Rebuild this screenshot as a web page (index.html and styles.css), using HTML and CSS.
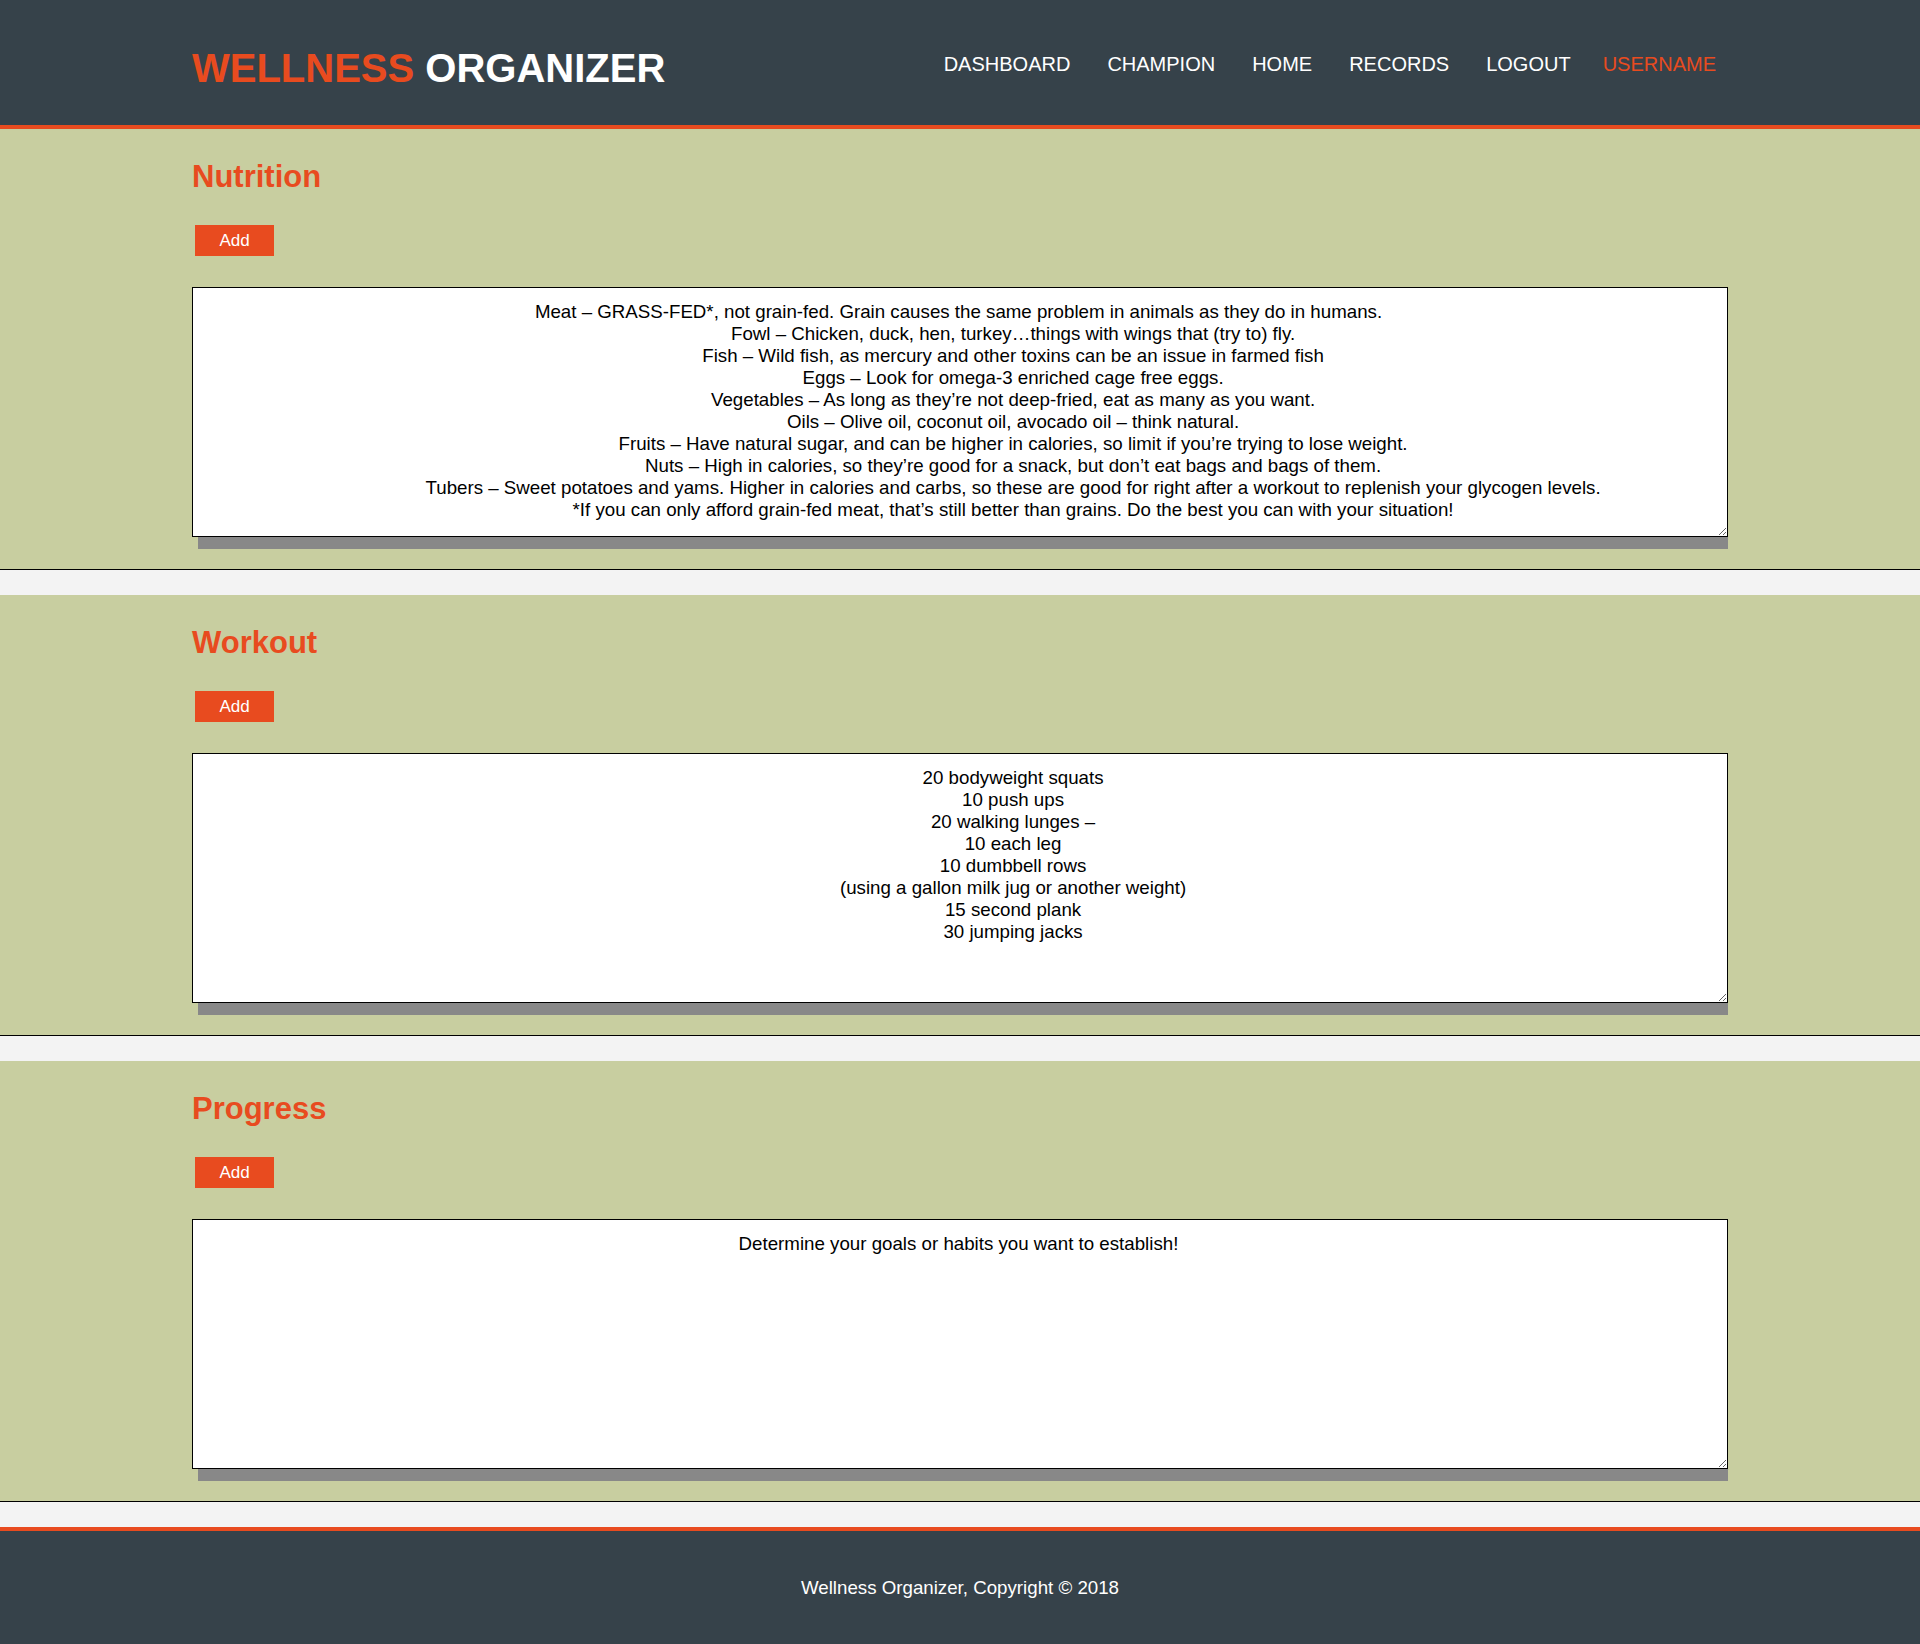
FILE: index.html
```html
<!DOCTYPE html>
<html lang="en">
<head>
<meta charset="utf-8">
<title>Wellness Organizer</title>
<link rel="stylesheet" href="styles.css">
</head>
<body>
<header class="site-header">
  <div class="container header-inner">
    <h1 class="logo"><span class="logo-accent">WELLNESS</span> ORGANIZER</h1>
    <nav class="main-nav">
      <ul class="nav-list">
        <li><a href="#">DASHBOARD</a></li>
        <li><a href="#">CHAMPION</a></li>
        <li><a href="#">HOME</a></li>
        <li><a href="#">RECORDS</a></li>
        <li><a href="#">LOGOUT</a></li>
        <li class="nav-user"><a href="#">USERNAME</a></li>
      </ul>
    </nav>
  </div>
</header>

<main>
  <section class="panel">
    <div class="container">
      <h2 class="panel-title">Nutrition</h2>
      <button class="add-btn" type="button">Add</button>
      <textarea class="panel-text">Meat – GRASS-FED*, not grain-fed. Grain causes the same problem in animals as they do in humans.
                     Fowl – Chicken, duck, hen, turkey…things with wings that (try to) fly.
                     Fish – Wild fish, as mercury and other toxins can be an issue in farmed fish
                     Eggs – Look for omega-3 enriched cage free eggs.
                     Vegetables – As long as they’re not deep-fried, eat as many as you want.
                     Oils – Olive oil, coconut oil, avocado oil – think natural.
                     Fruits – Have natural sugar, and can be higher in calories, so limit if you’re trying to lose weight.
                     Nuts – High in calories, so they’re good for a snack, but don’t eat bags and bags of them.
                     Tubers – Sweet potatoes and yams. Higher in calories and carbs, so these are good for right after a workout to replenish your glycogen levels.
                     *If you can only afford grain-fed meat, that’s still better than grains. Do the best you can with your situation!</textarea>
    </div>
  </section>

  <section class="panel">
    <div class="container">
      <h2 class="panel-title">Workout</h2>
      <button class="add-btn" type="button">Add</button>
      <textarea class="panel-text">
                     20 bodyweight squats
                     10 push ups
                     20 walking lunges –
                     10 each leg
                     10 dumbbell rows
                     (using a gallon milk jug or another weight)
                     15 second plank
                     30 jumping jacks</textarea>
    </div>
  </section>

  <section class="panel">
    <div class="container">
      <h2 class="panel-title">Progress</h2>
      <button class="add-btn" type="button">Add</button>
      <textarea class="panel-text">Determine your goals or habits you want to establish!</textarea>
    </div>
  </section>
</main>

<footer class="site-footer">
  <p class="footer-text">Wellness Organizer, Copyright © 2018</p>
</footer>
</body>
</html>
```

FILE: styles.css
```css
* {
  box-sizing: border-box;
}

html, body {
  margin: 0;
  padding: 0;
}

body {
  background: #f3f3f3;
  font-family: "Liberation Sans", Arial, sans-serif;
  color: #000;
}

.container {
  width: 80%;
  margin: 0 auto;
}

/* Header */
.site-header {
  background: #36424a;
  border-bottom: 4px solid #e84b1f;
}

.header-inner {
  height: 125px;
  display: flex;
  justify-content: space-between;
  align-items: flex-start;
}

.logo {
  margin: 0;
  padding-top: 45px;
  font-size: 40px;
  line-height: 46px;
  font-weight: bold;
  color: #fff;
  white-space: nowrap;
}

.logo-accent {
  color: #e84b1f;
}

.main-nav {
  padding-top: 53px;
  padding-right: 12px;
}

.nav-list {
  list-style: none;
  margin: 0;
  padding: 0;
  display: flex;
  gap: 37px;
}

.nav-list a {
  color: #fff;
  text-decoration: none;
  font-size: 20px;
  line-height: 23px;
  display: block;
}

.nav-list .nav-user {
  margin-left: -5px;
}

.nav-list .nav-user a {
  color: #e84b1f;
}

/* Panels */
.panel {
  background: #c8cea0;
  border-bottom: 1px solid #000;
  padding: 30px 0 32px;
  margin-bottom: 25px;
}

.panel-title {
  margin: 0;
  font-size: 31px;
  line-height: 35px;
  font-weight: bold;
  color: #e84b1f;
}

.add-btn {
  display: block;
  margin: 31px 0 0 3px;
  width: 79px;
  height: 31px;
  padding: 0;
  border: none;
  background: #e84b1f;
  color: #fff;
  font-family: "Liberation Sans", Arial, sans-serif;
  font-size: 17px;
  cursor: pointer;
}

.panel-text {
  display: block;
  margin-top: 31px;
  width: 100%;
  height: 250px;
  padding: 13px 6px 13px 3px;
  border: 1px solid #000;
  background: #fff;
  color: #000;
  font-family: "Liberation Sans", Arial, sans-serif;
  font-size: 18.72px;
  line-height: 22px;
  text-align: center;
  box-shadow: 3px 15px 0 -3px #888;
  overflow: hidden;
}

/* Footer */
.site-footer {
  background: #36424a;
  border-top: 4px solid #e84b1f;
  height: 118px;
  display: flex;
  align-items: center;
  justify-content: center;
}

.footer-text {
  margin: 0;
  color: #fff;
  font-size: 18.72px;
  line-height: 22px;
}
```
